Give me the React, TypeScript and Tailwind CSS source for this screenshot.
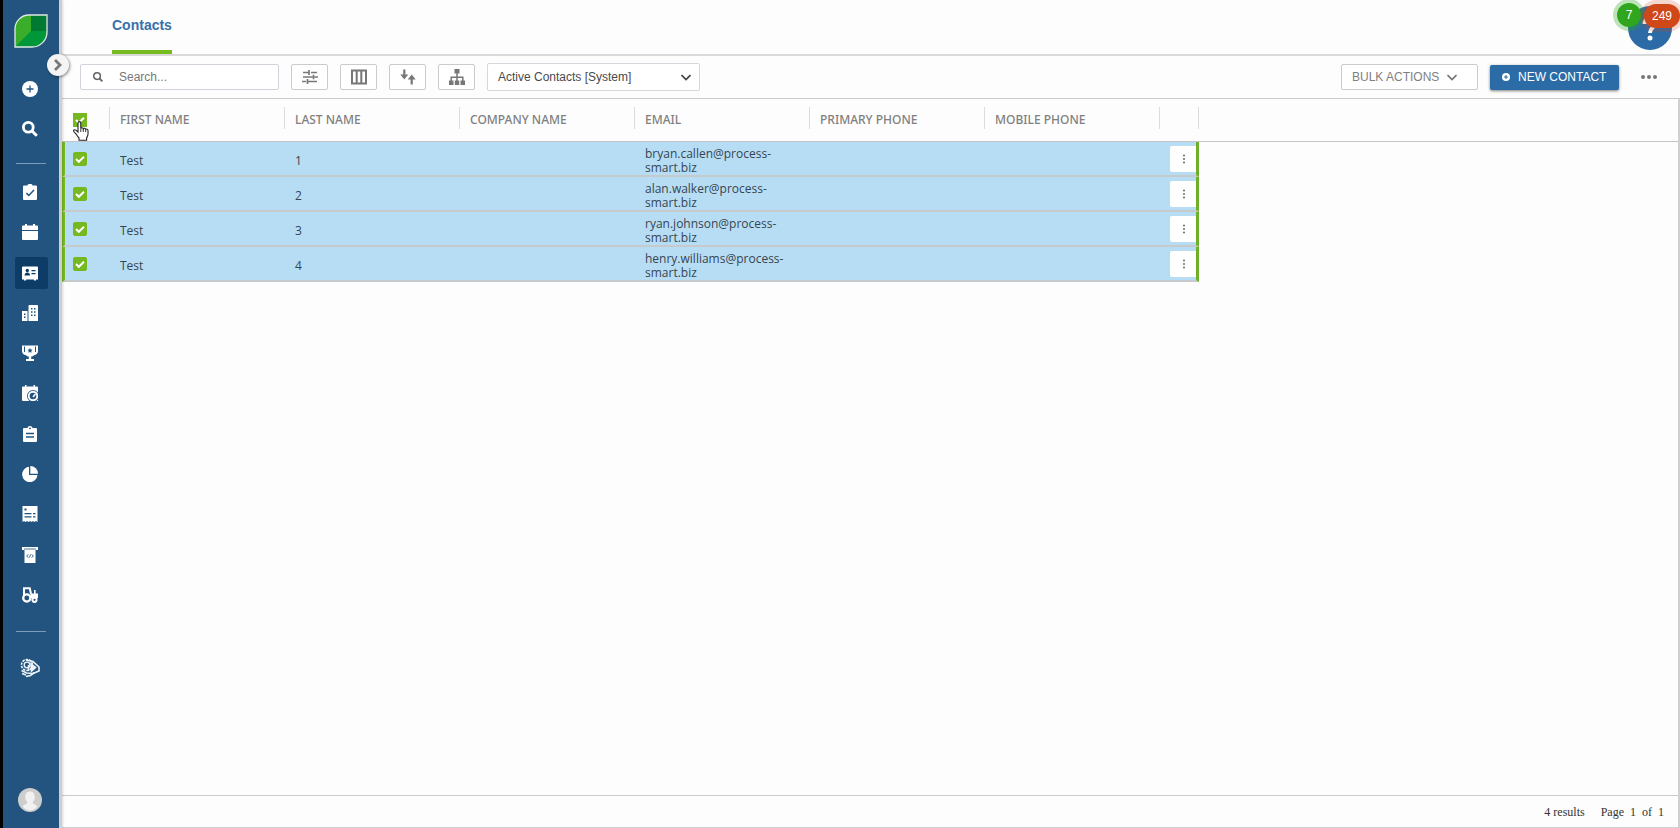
import React, { useState } from 'react';

interface Contact {
  id: number;
  firstName: string;
  lastName: string;
  email: string;
}

interface NavItem {
  label: string;
  icon: React.ReactNode;
}

const CONTACTS: Contact[] = [
  { id: 1, firstName: 'Test', lastName: '1', email: 'bryan.callen@process-smart.biz' },
  { id: 2, firstName: 'Test', lastName: '2', email: 'alan.walker@process-smart.biz' },
  { id: 3, firstName: 'Test', lastName: '3', email: 'ryan.johnson@process-smart.biz' },
  { id: 4, firstName: 'Test', lastName: '4', email: 'henry.williams@process-smart.biz' },
];

const COLUMNS = ['FIRST NAME', 'LAST NAME', 'COMPANY NAME', 'EMAIL', 'PRIMARY PHONE', 'MOBILE PHONE'];

const BLUE = '#22547f';

// 16px icon used all over the sidebar
function Icon({ children, className = 'w-4 h-4' }: { children: React.ReactNode; className?: string }) {
  return (
    <svg viewBox="0 0 16 16" fill="currentColor" className={className} aria-hidden="true">
      {children}
    </svg>
  );
}

const NAV_ITEMS: NavItem[] = [
  {
    label: 'Tasks',
    icon: (
      <Icon>
        <path d="M2 1.500h3.500a2.500 1.600 0 0 1 5 0H14a1 1 0 0 1 1 1V15a1 1 0 0 1-1 1H2a1 1 0 0 1-1-1V2.500a1 1 0 0 1 1-1z" />
        <path d="M4.300 9l2.500 2.400L12 6" fill="none" stroke={BLUE} strokeWidth="1.500" />
      </Icon>
    ),
  },
  {
    label: 'Calendar',
    icon: (
      <Icon>
        <path d="M0 6V2.500a1 1 0 0 1 1-1h2V0h2v1.500h6V0h2v1.500h2a1 1 0 0 1 1 1V6z" />
        <path d="M0 7h16v8a1 1 0 0 1-1 1H1a1 1 0 0 1-1-1z" />
      </Icon>
    ),
  },
  {
    label: 'Contacts',
    icon: (
      <Icon>
        <path d="M1 1.500h14a1 1 0 0 1 1 1v12h-2v1h-2v-1H4v1H2v-1H0v-12a1 1 0 0 1 1-1z" />
        <g fill="#0d3d66">
          <circle cx="5.300" cy="5.500" r="1.700" />
          <path d="M2.600 10.500c0-2 1-3 2.700-3s2.700 1 2.700 3zM9.500 5h4v1.300h-4zM9.500 8h4v1.300h-4z" />
        </g>
      </Icon>
    ),
  },
  {
    label: 'Companies',
    icon: (
      <Icon>
        <path d="M7 0h8a1 1 0 0 1 1 1v15H6.500V1A1 1 0 0 1 7 0zM0 6h5.500v10H0z" />
        <path
          d="M9 3h1.500v1.500H9zM12 3h1.500v1.500H12zM9 6.200h1.500v1.500H9zM12 6.200h1.500v1.500H12zM9 9.400h1.500v1.500H9zM12 9.400h1.500v1.500H12zM2 8.500h1.500V10H2zM2 11.500h1.500V13H2z"
          fill={BLUE}
        />
      </Icon>
    ),
  },
  {
    label: 'Opportunities',
    icon: (
      <Icon>
        <path d="M0 .5h16V6c0 2.500-1.800 4-4 4.200-.8.700-1.700 1.200-2.800 1.400V14H12v2H4v-2h2.800v-2.400C5.700 11.400 4.800 10.900 4 10.200 1.800 10 0 8.500 0 6z" />
        <path d="M2.500 1.500v5.500M13.500 1.500v5.500" stroke={BLUE} strokeWidth="1" />
        <path d="M8 3l.8 1.600 1.700.2-1.200 1.200.3 1.800L8 7l-1.600.8.3-1.800-1.200-1.200 1.700-.2z" fill={BLUE} />
      </Icon>
    ),
  },
  {
    label: 'Scheduling',
    icon: (
      <Icon>
        <path d="M1 1.500h2V0h1.500v1.500h7V0H13v1.500h2a1 1 0 0 1 1 1V16H1a1 1 0 0 1-1-1V2.500a1 1 0 0 1 1-1z" />
        <circle cx="11" cy="11" r="6" fill={BLUE} />
        <circle cx="11" cy="11" r="5.200" />
        <circle cx="11" cy="11" r="3.300" fill={BLUE} />
        <path d="M11 12l2.500-3" stroke="currentColor" strokeWidth="1.600" />
      </Icon>
    ),
  },
  {
    label: 'Work Orders',
    icon: (
      <Icon>
        <path d="M2 2h3.500a2.500 2 0 0 1 5 0H14a1 1 0 0 1 1 1v12a1 1 0 0 1-1 1H2a1 1 0 0 1-1-1V3a1 1 0 0 1 1-1z" />
        <circle cx="8" cy="2.300" r="0.900" fill={BLUE} />
        <path d="M4 7.500h8M4 11h8" stroke={BLUE} strokeWidth="1.400" />
      </Icon>
    ),
  },
  {
    label: 'Reports',
    icon: (
      <Icon>
        <path d="M7 .8V9h8.500A7.700 7.700 0 1 1 7 .8z" />
        <path d="M8.300 0A7.700 7.700 0 0 1 16 7.700H8.300z" />
      </Icon>
    ),
  },
  {
    label: 'Estimates',
    icon: (
      <Icon>
        <path d="M.5 0h15v16l-1.500-1-1.500 1-1.500-1-1.500 1L8 15l-1.500 1L5 15l-1.500 1L2 15l-1.500 1z" />
        <path d="M2.500 2.500h2v2h-2zM2.500 7h7v1.300h-7zM11 7h2.500v1.300H11zM2.500 10.300h7v1.300h-7zM11 10.300h2.500v1.300H11z" fill={BLUE} />
      </Icon>
    ),
  },
  {
    label: 'Invoices',
    icon: (
      <Icon>
        <path d="M0 0h16v3h-2.500v13h-11V3H0z" />
        <path d="M2 2h12" stroke={BLUE} strokeWidth="0.800" />
        <path d="M6.300 7.300L4.700 9l1.600 1.700M9.700 7.300L11.300 9l-1.600 1.700M8.500 7.500l-1 3" fill="none" stroke={BLUE} strokeWidth="0.900" />
      </Icon>
    ),
  },
  {
    label: 'Equipment',
    icon: (
      <Icon>
        <path d="M2 8V1.200h5.800L9 7" fill="none" stroke="currentColor" strokeWidth="2" />
        <path d="M8.500 6.500H12V3h1.600v3.500H16V11H8.500z" />
        <circle cx="4.800" cy="11" r="3.600" fill={BLUE} stroke="currentColor" strokeWidth="2.300" />
        <circle cx="12.500" cy="12.800" r="2.100" fill={BLUE} stroke="currentColor" strokeWidth="2" />
      </Icon>
    ),
  },
];

function Checkbox({ label, checked, onChange, square }: { label: string; checked: boolean; onChange: () => void; square?: boolean }) {
  return (
    <label className="relative block w-3.5 h-3.5">
      <input
        type="checkbox"
        aria-label={label}
        checked={checked}
        onChange={onChange}
        className={`block w-3.5 h-3.5 appearance-none border border-[#75b81f] checked:bg-[#75b81f] ${square ? '' : 'rounded-xs'}`}
      />
      {checked && (
        <svg viewBox="0 0 14 14" className="absolute inset-0 w-3.5 h-3.5 pointer-events-none" aria-hidden="true">
          <path d="M3 7l2.800 2.800L11 4.800" fill="none" stroke="#fff" strokeWidth="2" />
        </svg>
      )}
    </label>
  );
}

function Sidebar() {
  const [active, setActive] = useState('Contacts');

  return (
    <aside className="relative z-20 flex flex-col items-center w-[62px] shrink-0 border-l-3 border-l-black border-r-3 border-r-[#cfcfd1] bg-[#22547f] text-white shadow-[1px_0_2px_rgba(0,0,0,0.15)]">
      {/* Leaf logo */}
      <svg viewBox="0 0 34 34" className="w-[34px] h-[34px] mt-3.5 shrink-0" aria-label="Logo">
        <path d="M1 33V15A14 14 0 0 1 15 1H33V18A15 15 0 0 1 18 33Z" fill="#3aae2a" />
        <path d="M17 1H33V18H17Z" fill="#007a33" />
        <path d="M1 33L17 17H33V18A15 15 0 0 1 18 33Z" fill="#009739" />
        <path d="M1 33V15A14 14 0 0 1 15 1H33V18A15 15 0 0 1 18 33Z" fill="none" stroke="#dfe9e4" strokeWidth="1.300" />
      </svg>

      <button
        aria-label="Expand menu"
        className="absolute top-[54px] left-11 flex items-center justify-center w-[22px] h-[22px] rounded-full bg-[#f4f4f4] shadow-[1px_1px_3px_rgba(0,0,0,0.45)]"
      >
        <svg viewBox="0 0 12 12" className="w-3 h-3" fill="none" stroke="#777" strokeWidth="2.800" aria-hidden="true">
          <path d="M3 1l5 5-5 5" />
        </svg>
      </button>

      <button aria-label="Add" className="mt-[33px] pr-0.5">
        <Icon>
          <circle cx="8" cy="8" r="8" />
          <path d="M8 4.500v7M4.500 8h7" stroke={BLUE} strokeWidth="1.300" />
        </Icon>
      </button>
      <button aria-label="Search" className="mt-6 pr-0.5">
        <Icon>
          <circle cx="6.300" cy="6.300" r="4.900" fill="none" stroke="currentColor" strokeWidth="2.800" />
          <path d="M10 10l4.800 4.800" stroke="currentColor" strokeWidth="3" />
        </Icon>
      </button>

      <hr className="w-[30px] mt-[26px] border-0 h-px bg-[#7c9cba]" />

      <nav className="flex flex-col items-center justify-between h-[435px] mt-3" aria-label="Main">
        {NAV_ITEMS.map((item) => (
          <a
            key={item.label}
            href="#"
            aria-label={item.label}
            onClick={() => setActive(item.label)}
            className={`flex items-center justify-center w-[33px] h-8 pr-0.5 rounded-xs ${active === item.label ? 'bg-[#0d3d66]' : ''}`}
          >
            {item.icon}
          </a>
        ))}
      </nav>

      <hr className="w-[30px] mt-5 border-0 h-px bg-[#7c9cba]" />

      <button aria-label="Settings" className="mt-[26px] pr-0.5">
        <svg viewBox="0 0 20 20" className="w-5 h-5" fill="none" stroke="#eef4f9" strokeWidth="1.600" aria-hidden="true">
          <circle cx="7" cy="7" r="5.500" strokeDasharray="2.400 1" />
          <circle cx="7" cy="7" r="2.800" strokeWidth="1.300" />
          <path d="M6 2l7 1.500 6 5.500v4l-6 2.500" />
          <path d="M11 6l4.500 3.500-4 3.500z" fill="#eef4f9" />
          <path d="M1.500 12.500l5 2.500 6 .5M6 18.500l4.500-1 4-3M2 15.500l4 1.500" />
          <path d="M8.500 7v6" />
        </svg>
      </button>

      {/* User avatar */}
      <button aria-label="Profile" className="mt-auto mb-4 pr-0.5">
        <svg viewBox="0 0 24 24" className="w-6 h-6" aria-hidden="true">
          <circle cx="12" cy="12" r="12" fill="#cdcdcd" />
          <path d="M12 3.500c3.200 0 4.800 2.200 4.800 5.300 0 2.500-1 4.300-2.200 5.400.2 2 3.400 2.300 5 4A10.500 10.500 0 0 1 12 22.500a10.500 10.500 0 0 1-7.600-4.300c1.600-1.700 4.800-2 5-4C8.200 13.100 7.200 11.300 7.200 8.800c0-3.100 1.600-5.300 4.800-5.300z" fill="#f1f1f1" />
        </svg>
      </button>
    </aside>
  );
}

function TopBar() {
  return (
    <header className="relative flex items-end h-14 pl-[50px] border-b-2 border-[#d9d9db]">
      <a href="#" className="flex items-center h-[54px] border-b-4 border-[#76bc21] text-sm font-bold text-[#3871a9]">
        Contacts
      </a>

      {/* Help bubble with notification counters on top of it */}
      <button aria-label="Help" className="absolute top-1.5 right-2 z-10 w-11 h-11 rounded-full bg-[#2c6ba6]">
        <svg viewBox="0 0 44 44" className="w-11 h-11" fill="none" stroke="#fff" strokeWidth="4" aria-hidden="true">
          <path d="M16.500 18c0-8 11-8 11-1.500 0 4.500-5.500 5-5.500 10.500" />
          <circle cx="22" cy="32" r="2.500" fill="#fff" stroke="none" />
        </svg>
      </button>
      <span className="absolute top-[3px] right-[39px] z-10 flex items-center justify-center w-6 h-6 rounded-full bg-[#2fa61d] ring-4 ring-[#2fa61d]/30 text-xs text-white">
        7
      </span>
      <span className="absolute top-1 right-0 z-10 flex items-center justify-center w-9 h-6 rounded-full bg-[#d04718] ring-4 ring-[#d04718]/20 text-xs text-white">
        249
      </span>
    </header>
  );
}

function ToolButton({ label, children }: { label: string; children: React.ReactNode }) {
  return (
    <button
      aria-label={label}
      className="flex items-center justify-center w-[37px] h-[26px] border border-[#cbcbcd] rounded-xs bg-white text-[#777]"
    >
      {children}
    </button>
  );
}

function Toolbar() {
  const [search, setSearch] = useState('');

  return (
    <div className="flex items-center h-[43px] pl-[18px] pr-[23px] border-b border-[#cbcbcd] text-xs">
      <label className="flex items-center w-[199px] h-[26px] pl-3 border border-[#d0d3d9] rounded-xs bg-white">
        <Icon className="w-2.5 h-2.5 text-[#666]">
          <circle cx="6.500" cy="6.500" r="5.300" fill="none" stroke="currentColor" strokeWidth="2.400" />
          <path d="M10 10l5 5" stroke="currentColor" strokeWidth="3" />
        </Icon>
        <input
          type="text"
          aria-label="Search"
          placeholder="Search..."
          value={search}
          onChange={(e) => setSearch(e.target.value)}
          className="w-[150px] ml-4 outline-none placeholder:text-[#777]"
        />
      </label>

      <div className="flex items-center gap-3 ml-3">
        <ToolButton label="Filters">
          <Icon>
            <path
              d="M1 3.500h6M9 3.500h6M7 1v5M1 8h9.500M12.500 8H16M11.500 5.800v4.400M0 12.500h4M6 12.500h9M5.500 10v5"
              fill="none"
              stroke="currentColor"
              strokeWidth="1.700"
            />
          </Icon>
        </ToolButton>
        <ToolButton label="Columns">
          <Icon>
            <path d="M1 1.500h14v13H1zM5.700 1.500v13M10.300 1.500v13" fill="none" stroke="currentColor" strokeWidth="2" />
          </Icon>
        </ToolButton>
        <ToolButton label="Sort">
          <Icon>
            <path d="M4.300 .5V7M11.700 9v6.500" stroke="currentColor" strokeWidth="2.200" />
            <path d="M.3 5.500h8L4.300 10.500zM7.700 10.500h8L11.700 5.500z" />
          </Icon>
        </ToolButton>
        <ToolButton label="Hierarchy">
          <Icon>
            <path d="M5.500 0h5v4.500h-5zM0 11.500h4.500V16H0zM5.800 11.500h4.400V16H5.800zM11.500 11.500H16V16h-4.500z" />
            <path d="M8 4v8M2.200 12V8.200h11.600V12" fill="none" stroke="currentColor" strokeWidth="1.500" />
          </Icon>
        </ToolButton>

        <div className="relative">
          <select
            aria-label="View"
            className="block w-[213px] h-7 pl-2.5 appearance-none border border-[#d4d7dc] rounded-xs bg-white text-[#4a4a4a]"
          >
            <option>Active Contacts [System]</option>
          </select>
          <svg viewBox="0 0 10 10" className="absolute top-[9px] right-[9px] w-2.5 h-2.5 pointer-events-none" fill="none" stroke="#444" strokeWidth="1.700" aria-hidden="true">
            <path d="M.5 3L5 7.500 9.500 3" />
          </svg>
        </div>
      </div>

      <div className="flex items-center ml-auto">
        <button className="flex items-center w-[137px] h-[26px] pl-2.5 border border-[#cbcbcd] rounded-xs bg-white text-[#808080]">
          BULK ACTIONS
          <svg viewBox="0 0 10 10" className="w-2.5 h-2.5 ml-2" fill="none" stroke="#777" strokeWidth="1.700" aria-hidden="true">
            <path d="M.5 3L5 7.500 9.500 3" />
          </svg>
        </button>
        <button className="flex items-center w-[129px] h-[25px] ml-3 pl-3 rounded-xs bg-[#2b6ba6] text-white shadow-[0_1px_3px_rgba(0,0,0,0.5)]">
          <Icon className="w-2 h-2 mr-2">
            <circle cx="8" cy="8" r="8" />
            <path d="M8 4v8M4 8h8" stroke="#2b6ba6" strokeWidth="2" />
          </Icon>
          NEW CONTACT
        </button>
        <button aria-label="More" className="ml-[22px]">
          <Icon>
            <circle cx="2" cy="8" r="2" fill="#777" />
            <circle cx="8" cy="8" r="2" fill="#777" />
            <circle cx="14" cy="8" r="2" fill="#777" />
          </Icon>
        </button>
      </div>
    </div>
  );
}

function ContactRow({ contact, selected, onToggle }: { contact: Contact; selected: boolean; onToggle: () => void }) {
  const cell = `pt-1 pl-[11px] border-b-2 border-[#c6cacc] ${selected ? 'bg-[#b7ddf5]' : 'bg-white'}`;

  return (
    <tr className="h-[35px]">
      <td className={`border-b-2 border-b-[#c6cacc] border-l-3 border-l-[#76bc21] pl-2 ${selected ? 'bg-[#b7ddf5]' : 'bg-white'}`}>
        <Checkbox label={`Select ${contact.firstName} ${contact.lastName}`} checked={selected} onChange={onToggle} />
      </td>
      <td className={cell}>{contact.firstName}</td>
      <td className={cell}>{contact.lastName}</td>
      <td className={cell} />
      <td className={`${cell} pr-[11px]`}>{contact.email}</td>
      <td className={cell} />
      <td className={cell} />
      <td className={`border-b-2 border-b-[#c6cacc] border-r-3 border-r-[#6fb02a] ${selected ? 'bg-[#b7ddf5]' : 'bg-white'}`}>
        <button aria-label="Row actions" className="flex items-center justify-center w-[26px] h-[26px] ml-auto pl-0.5 rounded-l-xs bg-white text-[#777]">
          <svg viewBox="0 0 4 10" className="w-1 h-2.5" fill="currentColor" aria-hidden="true">
            <circle cx="2" cy="1.500" r="1.100" />
            <circle cx="2" cy="5" r="1.100" />
            <circle cx="2" cy="8.500" r="1.100" />
          </svg>
        </button>
      </td>
      <td />
    </tr>
  );
}

export default function App() {
  const [selected, setSelected] = useState<number[]>(CONTACTS.map((c) => c.id));

  const allSelected = selected.length === CONTACTS.length;

  const toggleAll = () => setSelected(allSelected ? [] : CONTACTS.map((c) => c.id));

  const toggle = (id: number) => {
    setSelected(selected.includes(id) ? selected.filter((s) => s !== id) : [...selected, id]);
  };

  return (
    <div className="flex h-screen overflow-hidden bg-[#fdfdfd] font-['Liberation_Sans',Arial,sans-serif]">
      <Sidebar />

      <div className="flex flex-col flex-1 min-w-0">
        <TopBar />
        <Toolbar />

        <main className="flex flex-col flex-1 min-h-0 border-r-2 border-b border-[#d0d0d2]">
          <table className="w-full table-fixed border-separate border-spacing-0 text-xs leading-[14px] font-['Open_Sans',sans-serif] text-[#36454f]">
            <colgroup>
              <col className="w-[47px]" />
              {COLUMNS.map((name) => (
                <col key={name} className="w-[175px]" />
              ))}
              <col className="w-10" />
              <col />
            </colgroup>
            <thead>
              <tr className="h-[43px] text-left font-['Noto_Sans',sans-serif] text-[#808080]">
                <th className="pl-[11px] border-b border-[#c4c4c6]">
                  <div className="relative">
                    <Checkbox label="Select all" checked={allSelected} onChange={toggleAll} square />
                    {/* Hand pointer over the select-all box */}
                    <svg viewBox="0 0 16 20" className="absolute top-2 left-0 z-10 w-4 h-5 pointer-events-none" aria-hidden="true">
                      <path
                        d="M5 2a1.400 1.400 0 0 1 2.800 0v5.500c.3-1 2.300-1 2.500.3.500-.9 2.200-.6 2.400.5.700-.6 2.300-.2 2.300 1.200V13c0 1.800-1 3-1.400 4v2.300H6V17c-1-.8-2-2.500-2.700-3.700L.8 10.500c-.7-1.200.8-2.400 2-1.400L5 11z"
                        fill="#fff"
                        stroke="#222"
                        strokeWidth="1.100"
                      />
                      <path d="M7.800 7.500V11M10.300 8v3M12.700 8.500V11" stroke="#222" strokeWidth="0.900" />
                    </svg>
                  </div>
                </th>
                {COLUMNS.map((name) => (
                  <th key={name} className="pb-1 border-b border-[#c4c4c6] font-medium">
                    <div className="flex items-center h-[22px] pt-1 pl-2.5 border-l border-[#dcdcde]">{name}</div>
                  </th>
                ))}
                <th className="pb-1 border-b border-[#c4c4c6]">
                  <div className="h-[22px] border-x border-[#dcdcde]" />
                </th>
                <th className="border-b border-[#c4c4c6]" />
              </tr>
            </thead>
            <tbody>
              {CONTACTS.map((contact) => (
                <ContactRow
                  key={contact.id}
                  contact={contact}
                  selected={selected.includes(contact.id)}
                  onToggle={() => toggle(contact.id)}
                />
              ))}
            </tbody>
          </table>

          <footer className="flex items-center justify-end gap-4 h-8 mt-auto pr-3.5 border-t border-[#cbcbcd] text-xs font-['Liberation_Serif',serif] text-[#333]">
            <span>4 results</span>
            <span className="flex gap-1.5">
              <span>Page</span>
              <span>1</span>
              <span>of</span>
              <span>1</span>
            </span>
          </footer>
        </main>
      </div>
    </div>
  );
}
